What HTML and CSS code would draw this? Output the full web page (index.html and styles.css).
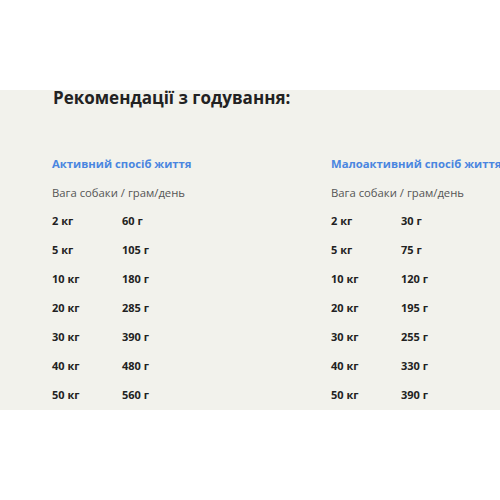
FILE: index.html
```html
<!DOCTYPE html>
<html lang="uk">
<head>
<meta charset="utf-8">
<link rel="stylesheet" href="styles.css">
</head>
<body>
<div class="top"></div>
<section class="feeding">
  <h2 class="title">Рекомендації з годування:</h2>
  <div class="columns">
    <div class="col">
      <h3 class="col-title">Активний спосіб життя</h3>
      <p class="subtitle">Вага собаки / грам/день</p>
      <div class="rows">
        <span>2 кг</span><span>60 г</span>
        <span>5 кг</span><span>105 г</span>
        <span>10 кг</span><span>180 г</span>
        <span>20 кг</span><span>285 г</span>
        <span>30 кг</span><span>390 г</span>
        <span>40 кг</span><span>480 г</span>
        <span>50 кг</span><span>560 г</span>
      </div>
    </div>
    <div class="col">
      <h3 class="col-title">Малоактивний спосіб життя</h3>
      <p class="subtitle">Вага собаки / грам/день</p>
      <div class="rows">
        <span>2 кг</span><span>30 г</span>
        <span>5 кг</span><span>75 г</span>
        <span>10 кг</span><span>120 г</span>
        <span>20 кг</span><span>195 г</span>
        <span>30 кг</span><span>255 г</span>
        <span>40 кг</span><span>330 г</span>
        <span>50 кг</span><span>390 г</span>
      </div>
    </div>
  </div>
</section>
</body>
</html>
```
FILE: styles.css
```css
html, body {
  margin: 0;
  padding: 0;
  background: #ffffff;
  font-family: "Open Sans", "Noto Sans", sans-serif;
  overflow: hidden;
}
.top {
  height: 90px;
}
.feeding {
  display: flex;
  flex-direction: column;
  background: #f2f2ec;
  height: 320px;
  padding: 0 0 0 52px;
  box-sizing: border-box;
}
.title {
  margin: -2px 0 0 1px;
  font-size: 17px;
  line-height: 20px;
  font-weight: 700;
  color: #222222;
}
.columns {
  display: grid;
  grid-template-columns: 279px 1fr;
  margin-top: 48px;
  white-space: nowrap;
}
.col-title {
  margin: 0;
  font-size: 11.3px;
  line-height: 16px;
  font-weight: 700;
  color: #4a86e0;
}
.subtitle {
  margin: 13px 0 0;
  font-size: 11.3px;
  line-height: 16px;
  font-weight: 400;
  color: #555555;
}
.rows {
  display: grid;
  grid-template-columns: 70px auto;
  grid-auto-rows: 29px;
  margin-top: 5px;
  font-size: 11px;
  line-height: 29px;
  font-weight: 700;
  color: #222222;
}
```
